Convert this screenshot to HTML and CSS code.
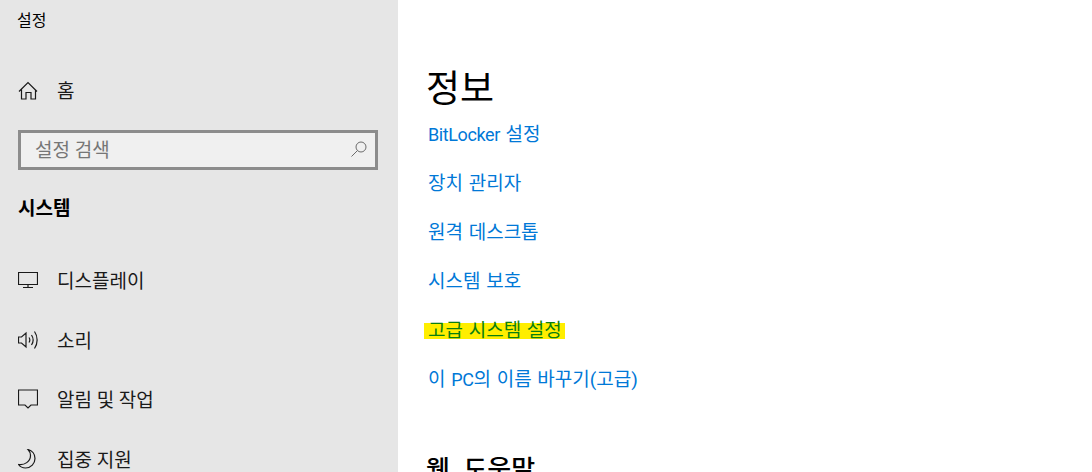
FILE: index.html
```html
<!DOCTYPE html>
<html lang="ko">
<head>
    <meta charset="UTF-8">
    <title>설정</title>
    <link rel="stylesheet" href="styles.css">
</head>
<body>
    <div class="window">
        <aside class="sidebar">
            <div class="app-title">설정</div>
            <a class="nav-item home-item">
                <svg class="nav-icon" viewBox="0 0 20 20"><path d="M1 10.500 10 1.500l9 9M3.500 8.500v9.500h4.500v-6.500h5V18h4.500V8.500" /></svg>
                <span>홈</span>
            </a>
            <div class="search-box">
                <span class="search-text">설정 검색</span>
                <svg class="search-icon" viewBox="0 0 16 16"><circle cx="10" cy="6" r="5" /><path d="M6.500 9.500 0.500 15.500" /></svg>
            </div>
            <div class="section-title">시스템</div>
            <nav class="nav-list">
                <a class="nav-item">
                    <svg class="nav-icon" viewBox="0 0 20 20"><path d="M.5 2.500h19v12H.5zM10 14.500v3.500M5 17.500h10" /></svg>
                    <span>디스플레이</span>
                </a>
                <a class="nav-item">
                    <svg class="nav-icon" viewBox="0 0 20 20"><path d="M.5 7v6h3l4.500 4V3L3.500 7zM11 7.500c1 1.500 1 3.500 0 5M13.500 5c2 3 2 7 0 10M16.500 1.500c3.500 5 3.500 12 0 17" /></svg>
                    <span>소리</span>
                </a>
                <a class="nav-item">
                    <svg class="nav-icon" viewBox="0 0 20 20"><path d="M.5 1h19v15h-6.500L10 19l-3-3H.5z" /></svg>
                    <span>알림 및 작업</span>
                </a>
                <a class="nav-item">
                    <svg class="nav-icon" viewBox="0 0 20 20"><path d="M10 .5c4 1 7 4.500 7 9 0 5-4 9.500-9.500 9.500-3 0-5.500-1.500-7-3.500 6 1 12-3 12-9 0-2.500-1-4.500-2.500-6z" /></svg>
                    <span>집중 지원</span>
                </a>
            </nav>
        </aside>
        <main class="content">
            <h1 class="page-title">정보</h1>
            <ul class="link-list">
                <li><a><span class="latin">BitLocker</span> 설정</a></li>
                <li><a>장치 관리자</a></li>
                <li><a>원격 데스크톱</a></li>
                <li><a>시스템 보호</a></li>
                <li><a class="marked">고급 시스템 설정</a></li>
                <li><a>이 <span class="latin">PC</span>의 이름 바꾸기(고급)</a></li>
            </ul>
            <h2 class="help-title">웹 도움말</h2>
        </main>
    </div>
</body>
</html>
```
FILE: styles.css
```css
html, body {
    margin: 0;
    padding: 0;
    height: 472px;
    overflow: hidden;
    background-color: #ffffff;
}
body {
    font-family: Roboto, "Noto Sans CJK KR", sans-serif;
    color: #000000;
}
.window {
    display: flex;
    height: 472px;
    overflow: hidden;
}

/* Sidebar */
.sidebar {
    width: 398px;
    flex-shrink: 0;
    background-color: #e6e6e6;
    padding: 11px 20px 0 18px;
    box-sizing: border-box;
}
.app-title {
    margin-left: -1px;
    font-size: 16px;
    line-height: 20px;
}
.nav-item {
    display: flex;
    align-items: center;
    height: 24px;
    font-size: 19px;
    line-height: 24px;
    color: #1a1a1a;
}
.nav-item span {
    padding-top: 4px;
}
.home-item {
    margin-top: 48px;
}
.home-item span {
    padding-top: 2px;
}
.nav-icon {
    width: 20px;
    height: 20px;
    margin-right: 19px;
    fill: none;
    stroke: #1a1a1a;
    stroke-width: 1.200;
}
.search-box {
    display: flex;
    align-items: center;
    justify-content: space-between;
    height: 40px;
    margin-top: 27px;
    padding: 0 8px 3px 14px;
    box-sizing: border-box;
    background-color: #f0f0f0;
    border: 3px solid #8c8c8c;
}
.search-text {
    font-size: 19px;
    color: #767676;
}
.search-icon {
    width: 16px;
    height: 16px;
    fill: none;
    stroke: #6b6b6b;
    stroke-width: 1;
}
.section-title {
    margin-top: 26px;
    font-size: 19px;
    line-height: 26px;
    font-weight: 700;
}
.nav-list {
    display: flex;
    flex-direction: column;
    gap: 35.700px;
    margin-top: 46px;
}

/* Content */
.content {
    padding: 66px 0 0 28px;
}
.page-title {
    margin: 0;
    font-size: 37px;
    line-height: 48px;
    font-weight: 400;
}
.link-list {
    list-style: none;
    margin: 0;
    padding: 0 0 0 2px;
}
.link-list li {
    height: 49px;
    font-size: 19px;
    line-height: 42px;
    word-spacing: 1px;
    color: #0078d7;
}
.latin {
    font-size: 18px;
    letter-spacing: -0.400px;
}
.marked {
    display: inline-block;
    line-height: 16px;
    padding: 0 3px 0 4px;
    margin-left: -4px;
    background-color: #ffee00;
    color: #0a7f10;
}
.help-title {
    margin: 45px 0 0;
    font-size: 26px;
    line-height: 34px;
    font-weight: 500;
    word-spacing: 7px;
}
```
